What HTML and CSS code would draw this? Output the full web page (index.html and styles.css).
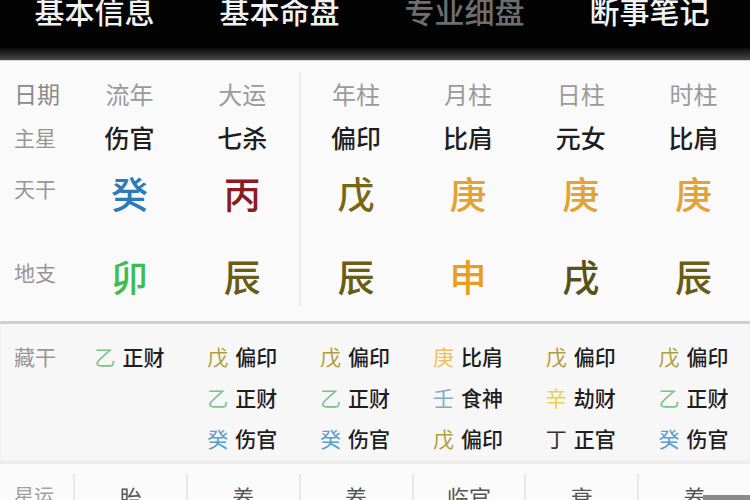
FILE: index.html
```html
<!DOCTYPE html>
<html>
<head>
  <meta charset="UTF-8">
  <title>专业细盘</title>
  <link rel="stylesheet" href="styles.css">
  <meta name="viewport" content="width=device-width, initial-scale=1.0">
</head>
<body>
  <!-- 顶部标签 -->
  <div class="tabs">
    <div class="tab">基本信息</div>
    <div class="tab">基本命盘</div>
    <div class="tab tab-active">专业细盘</div>
    <div class="tab">断事笔记</div>
  </div>
  <div class="tabs-shade"></div>

  <!-- 四柱 -->
  <div class="pillars">
    <div class="row row-date">
      <div class="label">日期</div>
      <div class="cell">流年</div>
      <div class="cell">大运</div>
      <div class="cell sep">年柱</div>
      <div class="cell">月柱</div>
      <div class="cell">日柱</div>
      <div class="cell">时柱</div>
    </div>
    <div class="row row-star">
      <div class="label small">主星</div>
      <div class="cell">伤官</div>
      <div class="cell">七杀</div>
      <div class="cell sep">偏印</div>
      <div class="cell">比肩</div>
      <div class="cell">元女</div>
      <div class="cell">比肩</div>
    </div>
    <div class="row row-gan">
      <div class="label small up">天干</div>
      <div class="cell big c-gui">癸</div>
      <div class="cell big c-bing">丙</div>
      <div class="cell big sep c-wu">戊</div>
      <div class="cell big c-geng">庚</div>
      <div class="cell big c-geng">庚</div>
      <div class="cell big c-geng">庚</div>
    </div>
    <div class="row row-zhi">
      <div class="label small up">地支</div>
      <div class="cell big c-mao">卯</div>
      <div class="cell big c-chen">辰</div>
      <div class="cell big sep c-chen">辰</div>
      <div class="cell big c-shen">申</div>
      <div class="cell big c-xu">戌</div>
      <div class="cell big c-chen">辰</div>
    </div>
  </div>

  <!-- 藏干 -->
  <div class="hidden">
    <div class="label small">藏干</div>
    <div class="hcell"><span class="s-yi">乙</span>正财</div>
    <div class="hcell"><span class="s-wu">戊</span>偏印</div>
    <div class="hcell"><span class="s-wu">戊</span>偏印</div>
    <div class="hcell"><span class="s-geng">庚</span>比肩</div>
    <div class="hcell"><span class="s-wu">戊</span>偏印</div>
    <div class="hcell"><span class="s-wu">戊</span>偏印</div>

    <div></div>
    <div></div>
    <div class="hcell"><span class="s-yi">乙</span>正财</div>
    <div class="hcell"><span class="s-yi">乙</span>正财</div>
    <div class="hcell"><span class="s-ren">壬</span>食神</div>
    <div class="hcell"><span class="s-xin">辛</span>劫财</div>
    <div class="hcell"><span class="s-yi">乙</span>正财</div>

    <div></div>
    <div></div>
    <div class="hcell"><span class="s-gui">癸</span>伤官</div>
    <div class="hcell"><span class="s-gui">癸</span>伤官</div>
    <div class="hcell"><span class="s-wu">戊</span>偏印</div>
    <div class="hcell"><span class="s-ding">丁</span>正官</div>
    <div class="hcell"><span class="s-gui">癸</span>伤官</div>
  </div>

  <!-- 星运 -->
  <div class="fortune">
    <div class="label small">星运</div>
    <div class="fcell">胎</div>
    <div class="fcell">养</div>
    <div class="fcell">养</div>
    <div class="fcell">临官</div>
    <div class="fcell">衰</div>
    <div class="fcell">养</div>
  </div>

  <div class="corner-mark"></div>
</body>
</html>
```

FILE: styles.css
```css
/* 全局 */
* {
  box-sizing: border-box;
  margin: 0;
  padding: 0;
  font-family: "Noto Sans CJK SC", "Noto Sans", sans-serif;
}

html, body {
  width: 750px;
  height: 500px;
  overflow: hidden;
}

body {
  background: #fafafa;
  position: relative;
}

/* 顶部标签 */
.tabs {
  display: grid;
  grid-template-columns: repeat(4, 1fr);
  height: 48px;
  background: #030303;
  padding: 0 8px 0 2px;
}

.tab {
  color: #f2f2f2;
  font-size: 30px;
  font-weight: 500;
  line-height: 20px;
  text-align: center;
}

.tab-active {
  color: #6e6e6e;
}

.tabs-shade {
  height: 13px;
  background: linear-gradient(#0c0c0c, #2e2e2e 60%, #4a4a4a);
  border-bottom: 1px solid #d8d8d8;
}

/* 通用列 */
.row,
.hidden,
.fortune {
  display: grid;
  grid-template-columns: 73px repeat(6, 1fr);
}

.label {
  color: #8a8a8a;
  font-size: 23px;
  padding-left: 14px;
}

.label.small {
  font-size: 21px;
  color: #969696;
}

.label.up {
  padding-bottom: 10px;
}

/* 四柱 */
.pillars {
  padding-top: 11px;
  padding-bottom: 15px;
}

.row {
  align-items: center;
}

.row > div {
  height: 100%;
  display: flex;
  align-items: center;
}

.cell {
  justify-content: center;
  font-size: 24px;
}

.sep {
  border-left: 2px solid #ececec;
}

.row-date { height: 42px; }
.row-date .cell { color: #9a9a9a; }

.row-star { height: 46px; }
.row-star .cell { color: #1e1e1e; font-weight: 500; font-size: 25px; }

.row-gan { height: 66px; }

.row-zhi { height: 80px; }
.row-zhi .cell { padding-top: 20px; }
.row-zhi .label { padding-top: 22px; }

.big {
  font-size: 37px;
  font-weight: 500;
}

.c-gui   { color: #2b7bb4; }
.c-bing  { color: #8c1a22; }
.c-wu    { color: #766615; }
.c-geng  { color: #e2a334; }
.c-mao   { color: #3dbd4e; }
.c-chen  { color: #685c16; }
.c-shen  { color: #e99d1e; }
.c-xu    { color: #57521a; }

/* 藏干 */
.hidden {
  background: #f7f7f7;
  border-top: 3px solid #cfcfcf;
  box-shadow: 0 -2px 3px rgba(0,0,0,0.06) inset;
  padding: 11px 0 5px;
  grid-auto-rows: 41px;
  align-items: center;
  border-bottom: 1px solid #ececec;
}

.hcell {
  text-align: center;
  font-size: 21px;
  color: #1e1e1e;
  font-weight: 500;
}

.hcell span {
  margin-right: 7px;
  font-weight: 400;
}

.s-yi   { color: #7cc38a; }
.s-wu   { color: #b09e3c; }
.s-gui  { color: #5a9ed0; }
.s-geng { color: #efc062; }
.s-ren  { color: #7eaebe; }
.s-xin  { color: #eccf4e; }
.s-ding { color: #333; }

/* 星运 */
.fortune {
  background: #fbfbfb;
  padding-top: 10px;
  height: 60px;
}

.fortune .label {
  line-height: 44px;
  font-size: 20px;
  color: #a0a0a0;
}

.fcell {
  border-left: 2px solid #e8e8e8;
  text-align: center;
  font-size: 22px;
  line-height: 44px;
  color: #555;
}

/* 右下角遮挡 */
.corner-mark {
  position: absolute;
  right: 0;
  bottom: 0;
  width: 47px;
  height: 5px;
  background: #8a8a8a;
}
```
